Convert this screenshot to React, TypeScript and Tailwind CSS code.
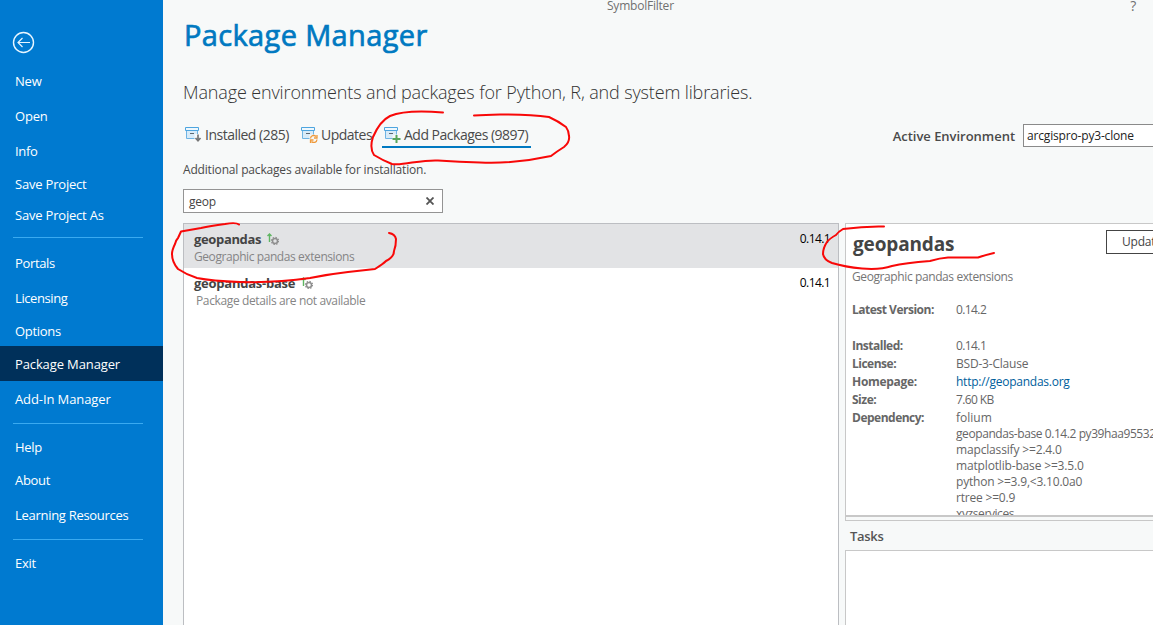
import React from "react";

type NavEntry = { label: string; box: string; active?: boolean } | "divider-a" | "divider-b" | "divider-c";

const nav: NavEntry[] = [
  { label: "New", box: "h-[35px]" },
  { label: "Open", box: "h-[35px]" },
  { label: "Info", box: "h-[35px] tracking-[-0.3px]" },
  { label: "Save Project", box: "h-8" },
  { label: "Save Project As", box: "h-[31px] pb-[2px]" },
  "divider-a",
  { label: "Portals", box: "h-[35px] tracking-[-0.35px]" },
  { label: "Licensing", box: "h-[35px] tracking-[-0.4px]" },
  { label: "Options", box: "h-[30px] pt-[2px] tracking-[-0.3px]" },
  { label: "Package Manager", box: "h-[35px] pt-[2px] tracking-[-0.12px]", active: true },
  { label: "Add-In Manager", box: "h-[37px] tracking-[-0.1px]" },
  "divider-b",
  { label: "Help", box: "h-[33px] tracking-[-0.3px]" },
  { label: "About", box: "h-[33px] tracking-[-0.3px]" },
  { label: "Learning Resources", box: "h-9 pt-[2px] tracking-[-0.29px]" },
  "divider-c",
  { label: "Exit", box: "h-[35px] tracking-[-0.3px]" },
];

const dividers = {
  "divider-a": "mt-[5px] mb-2",
  "divider-b": "mt-[5px] mb-[7px]",
  "divider-c": "mt-[6px] mb-[6px]",
};

function Sidebar() {
  return (
    <aside className="flex w-[163px] shrink-0 flex-col bg-[#007ad0] text-[13px] tracking-[-0.2px] text-white">
      <svg className="mt-[31px] ml-3 size-[23px] shrink-0" viewBox="0 0 23 23" fill="none" stroke="#e8f6ff">
        <circle cx="11.5" cy="11.5" r="10" strokeWidth="1.4" />
        <path d="M18 11.5H6M10.500 7L6 11.500l4.500 4.500" strokeWidth="1.200" />
      </svg>
      <nav className="mt-[10px] flex flex-col">
        {nav.map((n, i) =>
          typeof n === "string" ? (
            <div key={i} className={`mr-5 ml-[13px] h-px bg-[#3aaaf0] ${dividers[n]}`} />
          ) : (
            <div key={i} className={`flex items-center whitespace-nowrap pl-[15px] ${n.box} ${n.active ? "bg-[#00305a]" : ""}`}>
              {n.label}
            </div>
          )
        )}
      </nav>
    </aside>
  );
}

function PackageIcon({ kind }: { kind: "installed" | "updates" | "add" }) {
  return (
    <svg className="h-[17px] w-[17px] shrink-0" viewBox="0 0 17 17" fill="none">
      <path d="M1.500 4h11v8.500h-11z" fill="#d8ebf8" stroke="#6fb4e4" />
      <path d="M.5 1.500h13v3H.5z" fill="#eef8fe" stroke="#4ea5df" />
      <path d="M5 7.500h4" stroke="#5b6670" />
      {kind === "installed" && (
        <>
          <path d="M9.500 8h7v8h-7z" fill="#f7f9f9" />
          <path d="M13 8.500v6M10.500 12l2.500 2.700L15.500 12" stroke="#777" strokeWidth="1.700" />
        </>
      )}
      {kind === "updates" && (
        <>
          <path d="M8.500 8.500h8v8h-8z" fill="#f7f9f9" />
          <path d="M9.500 12.500a3.200 3.200 0 0 1 5.500-2M16 9v3h-3M16 13.500a3.200 3.200 0 0 1-5.500 2M9.500 17v-3h3" stroke="#ef9a3c" strokeWidth="1.300" />
        </>
      )}
      {kind === "add" && (
        <>
          <path d="M8.500 8.500h8v8h-8z" fill="#f7f9f9" />
          <path d="M12.500 9v8M8.500 13h8" stroke="#58a65c" strokeWidth="2" />
        </>
      )}
    </svg>
  );
}

function UpgradeGear() {
  return (
    <svg className="h-3 w-3 shrink-0" viewBox="0 0 12 12" fill="none">
      <path d="M2.500 9V1M.5 3l2-2 2 2" stroke="#5fb562" strokeWidth="1.400" />
      <circle cx="8" cy="8" r="2.500" stroke="#8f8f8f" strokeWidth="1.500" />
      <circle cx="8" cy="8" r="3.600" stroke="#8f8f8f" strokeWidth="1.200" strokeDasharray="1.400 1.427" />
    </svg>
  );
}

function Tabs() {
  return (
    <div className="flex h-6 items-start whitespace-nowrap text-[14px] leading-[22px] tracking-[-0.5px] text-[#4a4a4a]">
      <div className="flex w-[116px] gap-[3px] pl-[2px]">
        <span className="pt-[2px]"><PackageIcon kind="installed" /></span>
        <span>Installed (285)</span>
      </div>
      <div className="flex w-[83px] gap-[3px] pl-[2px]">
        <span className="pt-[2px]"><PackageIcon kind="updates" /></span>
        <span>Updates</span>
      </div>
      <div className="flex h-6 w-[149px] gap-[3px] border-b-2 border-[#0079c1] pl-[2px]">
        <span className="pt-[2px]"><PackageIcon kind="add" /></span>
        <span>Add Packages (9897)</span>
      </div>
    </div>
  );
}

function PackageRow({ name, detail, version, selected }: { name: string; detail: string; version: string; selected?: boolean }) {
  return (
    <div className={`flex h-11 justify-between pr-2 pl-[10px] ${selected ? "bg-[#e2e3e5]" : ""}`}>
      <div className="pt-[7px]">
        <div className={`flex gap-[6px] text-[13px] leading-[17px] font-bold text-[#444] ${selected ? "tracking-[-0.35px]" : "tracking-[-0.25px]"}`}>
          {name}
          <span className="pt-[2px]"><UpgradeGear /></span>
        </div>
        <div className={`text-[12px] leading-[17px] text-[#858585] ${selected ? "tracking-[-0.42px]" : "pl-[2px] tracking-[-0.37px]"}`}>{detail}</div>
      </div>
      <div className="pt-[7px] text-[12px] leading-4 tracking-[-0.6px] text-black">{version}</div>
    </div>
  );
}

const facts: [string, string, string][] = [
  ["Installed:", "0.14.1", "tracking-[-0.6px]"],
  ["License:", "BSD-3-Clause", "tracking-[-0.2px]"],
  ["Homepage:", "http://geopandas.org", "tracking-[-0.25px] text-[#00609c]"],
  ["Size:", "7.60 KB", "tracking-[-0.6px]"],
];

const deps: [string, string][] = [
  ["folium", ""],
  ["geopandas-base 0.14.2 py39haa95532", "tracking-[-0.42px]"],
  ["mapclassify >=2.4.0", "tracking-[-0.16px]"],
  ["matplotlib-base >=3.5.0", "tracking-[-0.16px]"],
  ["python >=3.9,<3.10.0a0", "tracking-[-0.2px]"],
  ["rtree >=0.9", "tracking-[-0.2px]"],
  ["xyzservices", "tracking-[-0.4px]"],
];

function Fact({ label, children }: { label: string; children: React.ReactNode }) {
  return (
    <div className="flex">
      <div className={`w-[104px] shrink-0 font-bold ${label === "Homepage:" ? "tracking-[-0.3px]" : "tracking-[-0.5px]"}`}>{label}</div>
      <div>{children}</div>
    </div>
  );
}

function Details() {
  return (
    <div className="h-[294px] overflow-hidden border-t border-b-2 border-l border-[#c8c8c8] bg-white pl-[6px] whitespace-nowrap text-[#666]">
      <div className="flex justify-between">
        <h2 className="pt-[7px] pl-px text-[19px] leading-[26px] font-bold tracking-[-0.15px] text-[#444]">geopandas</h2>
        <button className="mt-[6px] h-6 w-[47px] shrink-0 overflow-hidden border border-r-0 border-[#444] pl-[15px] text-left text-[12px] leading-[22px] tracking-[-0.2px] text-[#444]">Update</button>
      </div>
      <p className="mt-3 text-[12px] leading-4 tracking-[-0.4px] text-[#757575]">Geographic pandas extensions</p>
      <div className="mt-4 text-[12px] leading-[18px]">
        <Fact label="Latest Version:"><span className="tracking-[-0.6px]">0.14.2</span></Fact>
        <div className="h-[18px]" />
        {facts.map(([k, v, cls]) => (
          <Fact key={k} label={k}>
            <span className={cls}>{v}</span>
          </Fact>
        ))}
        <Fact label="Dependency:">
          <div className="pt-px leading-4">
            {deps.map(([d, cls]) => (
              <div key={d} className={cls}>{d}</div>
            ))}
          </div>
        </Fact>
      </div>
    </div>
  );
}

function Annotations() {
  return (
    <svg className="pointer-events-none absolute inset-0" width="1153" height="625" viewBox="0 0 1153 625" fill="none" stroke="#f80808" strokeWidth="2" strokeLinecap="round" strokeLinejoin="round">
      <path d="M443 112.500C425 111 402 111 390 116C382 120 376 130 373 137C370 146 372 152 374 155Q382 160 392 164Q398 165 412 162.500Q430 160 438 160.500Q460 162 480 162.500Q515 164 551 156Q556 152 564 147Q570 142 569 136Q569 131 566 127Q558 121 549 117Q530 114 500 114.500Q485 115 474 115.500" />
      <path d="M239 224.500Q236 222 225 224Q210 226 201 228L181 231.500L178 238Q176 240 175 244Q172 250 172 254Q172 262 178 269Q187 275 197 278Q212 281 240 282Q275 283 310 278Q330 274 348 272L375 269Q383 264 386 261Q394 257 394 251Q396 246 396 239Q395 234 389 233" />
      <path d="M884 226.500Q865 226 843 229Q838 232 836 235Q829 239 827 242Q823 248 823 254Q824 260 832 263Q845 267 862 268.500Q880 270 892 266Q905 263 930 261Q940 258 948 257.500H978Q985 255 994 253" />
    </svg>
  );
}

export default function App() {
  return (
    <div className="relative flex h-[625px] w-[1153px] overflow-hidden bg-[#f7f9f9] font-['Open_Sans','Noto_Sans',sans-serif]">
      <Sidebar />
      <main className="flex min-w-0 flex-1 flex-col pl-5">
        <header className="flex h-[15px] items-start text-[12px] leading-3 tracking-[-0.22px] text-[#707070]">
          <span className="pl-[424px]">SymbolFilter</span>
          <span className="mr-[17px] ml-auto text-[14px]">?</span>
        </header>
        <h1 className="pl-px text-[29px] leading-10 tracking-[0.35px] text-[#0079c1] [-webkit-text-stroke:0.7px_#0079c1]">Package Manager</h1>
        <p className="mt-[23px] text-[18px] leading-7 font-light tracking-[-0.135px] whitespace-nowrap text-[#333]">Manage environments and packages for Python, R, and system libraries.</p>
        <div className="mt-[18px] flex items-start justify-between">
          <Tabs />
          <div className="flex h-[23px] items-center gap-2 whitespace-nowrap">
            <span className="pt-[2px] text-[13px] font-semibold tracking-[-0.03px] text-[#4a4a4a]">Active Environment</span>
            <div className="h-[23px] w-[130px] border border-r-0 border-[#8a8a8a] bg-white pl-[3px] text-[12px] leading-[22px] tracking-[-0.17px] text-[#222]">arcgispro-py3-clone</div>
          </div>
        </div>
        <p className="mt-[13px] text-[12px] leading-[18px] tracking-[-0.17px] text-[#4a4a4a]">Additional packages available for installation.</p>
        <div className="mt-[10px] flex h-6 w-[260px] shrink-0 items-center justify-between border border-[#949494] bg-white pr-2 pl-[5px] text-[12px] tracking-[-0.2px] text-[#444]">
          <span className="pt-px">geop</span>
          <svg className="size-2" viewBox="0 0 8 8" stroke="#555" strokeWidth="1.800"><path d="M.5.5l7 7M7.500.5l-7 7" /></svg>
        </div>
        <div className="mt-[10px] flex min-h-0 flex-1 gap-[6px]">
          <section className="w-[656px] shrink-0 border border-b-0 border-[#bcbec2] bg-white">
            <PackageRow name="geopandas" detail="Geographic pandas extensions" version="0.14.1" selected />
            <PackageRow name="geopandas-base" detail="Package details are not available" version="0.14.1" />
          </section>
          <section className="flex min-w-0 flex-1 flex-col">
            <Details />
            <div className="h-1 shrink-0 border-b border-l border-[#c8c8c8]" />
            <h3 className="h-[29px] shrink-0 pl-[5px] text-[13px] leading-[30px] font-semibold tracking-[-0.3px] text-[#555]">Tasks</h3>
            <div className="flex-1 border-t border-l border-[#c8c8c8] bg-white" />
          </section>
        </div>
      </main>
      <Annotations />
    </div>
  );
}
